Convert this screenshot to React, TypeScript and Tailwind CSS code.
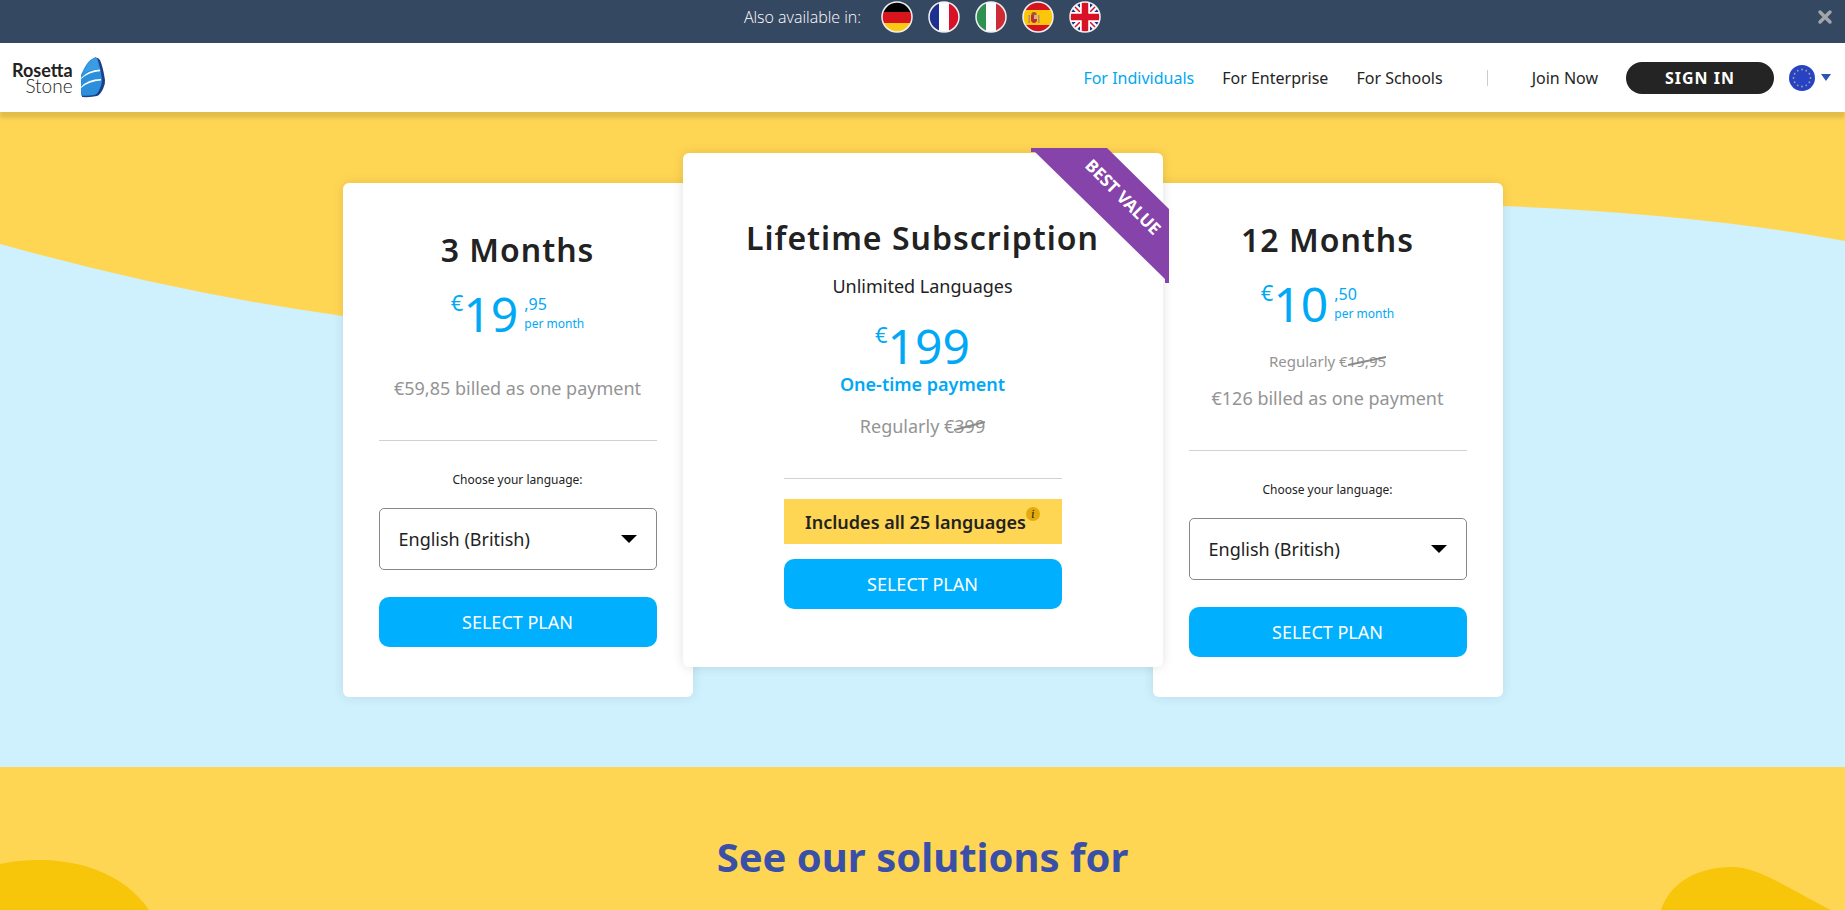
import { useState } from "react";
import type { ReactNode } from "react";

type FlagCode = "de" | "fr" | "it" | "es" | "gb";

interface Plan {
    id: string;
    title: string;
    whole: string;
    cents: string;
    regularly?: string;
    billed: string;
}

const flags: { code: FlagCode; label: string }[] = [
    { code: "de", label: "Deutsch" },
    { code: "fr", label: "Français" },
    { code: "it", label: "Italiano" },
    { code: "es", label: "Español" },
    { code: "gb", label: "English" },
];

const navLinks = [
    { label: "For Individuals", active: true },
    { label: "For Enterprise", active: false },
    { label: "For Schools", active: false },
];

const languages = ["English (British)", "English (American)", "French", "German", "Italian", "Spanish (Spain)"];

const threeMonths: Plan = {
    id: "three-months",
    title: "3 Months",
    whole: "19",
    cents: ",95",
    billed: "€59,85 billed as one payment",
};

const twelveMonths: Plan = {
    id: "twelve-months",
    title: "12 Months",
    whole: "10",
    cents: ",50",
    regularly: "19,95",
    billed: "€126 billed as one payment",
};

function FlagArt({ code }: { code: FlagCode }) {
    switch (code) {
        case "de":
            return (
                <>
                    <rect width="32" height="11" fill="#000" />
                    <rect y="11" width="32" height="11" fill="#d8141c" />
                    <rect y="22" width="32" height="10" fill="#fcc917" />
                </>
            );
        case "fr":
            return (
                <>
                    <rect width="11" height="32" fill="#1d2f8f" />
                    <rect x="11" width="10" height="32" fill="#fff" />
                    <rect x="21" width="11" height="32" fill="#d81126" />
                </>
            );
        case "it":
            return (
                <>
                    <rect width="11" height="32" fill="#2f9150" />
                    <rect x="11" width="10" height="32" fill="#fff" />
                    <rect x="21" width="11" height="32" fill="#cf2b37" />
                </>
            );
        case "es":
            return (
                <>
                    <rect width="32" height="32" fill="#d6141f" />
                    <rect y="9" width="32" height="15" fill="#fcc60a" />
                    <path d="M6.500 14h1.500v8H6.500zM16 14h1.500v8H16z" fill="#b98a6a" />
                    <path d="M9 14h6v5q0 2.500-3 3-3-.500-3-3z" fill="#b5323a" />
                    <path d="M12 14h3v4h-3z" fill="#d9a9a0" />
                    <path d="M9.500 12q2.500-2 5 0v2h-5z" fill="#a5562f" />
                </>
            );
        case "gb":
            return (
                <>
                    <rect width="32" height="32" fill="#1d2f8f" />
                    <path d="M0 0l32 32M32 0L0 32" stroke="#fff" strokeWidth="6" />
                    <path d="M0 0l32 32M32 0L0 32" stroke="#d81126" strokeWidth="1.500" />
                    <path d="M16 0v32M0 16h32" stroke="#fff" strokeWidth="10" />
                    <path d="M16 0v32M0 16h32" stroke="#d81126" strokeWidth="6.500" />
                </>
            );
    }
}

function Flag({ code }: { code: FlagCode }) {
    return (
        <svg viewBox="0 0 32 32" className="size-8" aria-hidden="true">
            <defs>
                <clipPath id={`flag-${code}`}>
                    <circle cx="16" cy="16" r="15" />
                </clipPath>
            </defs>
            <g clipPath={`url(#flag-${code})`}>
                <FlagArt code={code} />
            </g>
            <circle cx="16" cy="16" r="15" fill="none" stroke="#f1f1f1" strokeWidth="1.5" />
        </svg>
    );
}

function TopBar() {
    const [open, setOpen] = useState(true);

    if (!open) return null;

    return (
        <div className="flex h-[43px] items-start justify-between bg-[#354862] px-3">
            <div className="w-4" />
            <div className="flex items-center pt-px">
                <span className="mr-5 font-['Open_Sans',sans-serif] text-base font-light text-white">Also available in:</span>
                <div className="flex gap-[15px]">
                    {flags.map((flag) => (
                        <a key={flag.code} href="#" aria-label={flag.label}>
                            <Flag code={flag.code} />
                        </a>
                    ))}
                </div>
            </div>
            <button type="button" aria-label="Close" className="mt-[9px] text-[#a3a5a8]" onClick={() => setOpen(false)}>
                <svg viewBox="0 0 16 16" className="size-4" aria-hidden="true">
                    <path d="M3 3l10 10M13 3L3 13" stroke="currentColor" strokeWidth="3.500" strokeLinecap="round" />
                </svg>
            </button>
        </div>
    );
}

function Logo() {
    return (
        <a href="#" className="flex items-center gap-[7px] font-[Lato,sans-serif] text-[#222]">
            <span className="flex flex-col text-right leading-4">
                <span className="text-lg leading-4 font-bold">Rosetta</span>
                <span className="text-[19px] leading-4 font-light">Stone</span>
            </span>
            <svg viewBox="0 0 26 41" className="h-[41px] w-[26px]" aria-hidden="true">
                <path d="M15 .5Q18 0 20 3q3 7 5 20 .500 4-2 9-3 6-6 7-6 1.500-15 1L1 22l1-4Q6 8 9 5q3-3.500 6-4.500z" fill="#1d3f8a" />
                <path d="M15 .5q2 0 3 3 3 9 4 19 0 6-3 11-2 4-5 4.500-6 1-13 .5V18Q5 9 8 5.500 11 2 15 .5z" fill="#2b8fdc" />
                <path d="M15 1q2 0 2.500 3l2 9Q9 12 3 17 7 8 9 5.500 12 2 15 1z" fill="#3b9be3" />
                <path d="M1 21Q8 13 20 12.500v1.800Q9 15 1 22zM1 30q7-8 20-8v1.500Q9 24 1 31z" fill="#fff" />
            </svg>
        </a>
    );
}

function RegionFlag() {
    return (
        <svg viewBox="0 0 26 26" className="size-[26px]" aria-hidden="true">
            <circle cx="13" cy="13" r="13" fill="#2743c4" />
            {Array.from({ length: 12 }, (_, i) => (
                <circle
                    key={i}
                    cx={13 + 8.5 * Math.sin((i * Math.PI) / 6)}
                    cy={13 - 8.5 * Math.cos((i * Math.PI) / 6)}
                    r="0.9"
                    fill="#a9a08c"
                />
            ))}
        </svg>
    );
}

function Header() {
    return (
        <header className="relative z-10 flex h-[69px] items-center justify-between bg-white pr-3.5 pl-3 shadow-[0_6px_4px_rgba(0,0,0,0.12)]">
            <Logo />
            <nav className="flex items-center text-base">
                <div className="flex gap-7">
                    {navLinks.map((link) => (
                        <a key={link.label} href="#" className={link.active ? "text-[#00a8f0]" : "text-[#242424]"}>
                            {link.label}
                        </a>
                    ))}
                </div>
                <div className="mx-11 h-4 w-px bg-[#ccc]" />
                <a href="#" className="text-[#242424]">Join Now</a>
                <button type="button" className="ml-7 h-8 w-[148px] rounded-full bg-[#242424] font-bold tracking-[1px] text-white">
                    SIGN IN
                </button>
                <button type="button" aria-label="Choose region" className="ml-[15px] flex items-center gap-1.5">
                    <RegionFlag />
                    <svg viewBox="0 0 10 7" className="h-[7px] w-2.5" aria-hidden="true">
                        <path d="M0 0h10L5 7z" fill="#2f55b5" />
                    </svg>
                </button>
            </nav>
        </header>
    );
}

function SelectPlanButton() {
    return (
        <button type="button" className="h-[50px] w-full rounded-[10px] bg-[#00b0ff] text-lg text-white">
            SELECT PLAN
        </button>
    );
}

function Struck({ children }: { children: ReactNode }) {
    return (
        <span className="relative">
            {children}
            <svg viewBox="0 0 32 10" preserveAspectRatio="none" className="absolute inset-x-0 top-1/2 h-2.5 w-full -translate-y-1/2" aria-hidden="true">
                <path d="M0 9L32 1" stroke="#8a8a8a" strokeWidth="2" />
            </svg>
        </span>
    );
}

function PlanCard({ plan }: { plan: Plan }) {
    return (
        <section className="flex h-[514px] w-[350px] flex-col justify-center rounded-md bg-white px-9 pb-[3px] text-center shadow-[0_0_12px_rgba(0,0,0,0.1)]">
            <h2 className="text-[32px] leading-10 font-semibold tracking-[1px]">{plan.title}</h2>
            <div className="mt-5 flex justify-center text-[#00a8f5]">
                <span className="text-[22px] leading-6">€</span>
                <span className="text-5xl">{plan.whole}</span>
                <span className="ml-1.5 flex flex-col pt-1 text-left">
                    <span className="text-base leading-5">{plan.cents}</span>
                    <span className="text-xs leading-5">per month</span>
                </span>
            </div>
            <div className={plan.regularly ? "mt-[23px] text-[#949494]" : "mt-9 text-[#949494]"}>
                {plan.regularly && (
                    <p className="mb-[13px] text-[15px] leading-5">
                        Regularly €<Struck>{plan.regularly}</Struck>
                    </p>
                )}
                <p className="text-lg">{plan.billed}</p>
            </div>
            <hr className="mt-[38px] border-[#d2d2d2]" />
            <label htmlFor={plan.id} className="mt-[31px] text-xs">Choose your language:</label>
            <div className="relative mt-5">
                <select id={plan.id} className="h-[62px] w-full appearance-none rounded-[5px] border border-[#888] bg-white px-[19px] text-lg">
                    {languages.map((language) => (
                        <option key={language}>{language}</option>
                    ))}
                </select>
                <svg viewBox="0 0 16 8" className="pointer-events-none absolute top-[27px] right-5 h-2 w-4" aria-hidden="true">
                    <path d="M0 0h16L8 8z" />
                </svg>
            </div>
            <div className="mt-[27px]">
                <SelectPlanButton />
            </div>
        </section>
    );
}

function LifetimeCard() {
    return (
        <section className="relative z-1 -mx-2.5 flex h-[514px] w-[480px] flex-col items-center rounded-md bg-white pt-[65px] text-center shadow-[0_0_12px_rgba(0,0,0,0.12)]">
            <div className="absolute -top-[5px] -right-1.5 h-[135px] w-[138px]">
                <svg viewBox="0 0 138 135" className="absolute inset-0" aria-hidden="true">
                    <path d="M0 0h76l62 61v74h-4v-4L4 4H0z" fill="#8643a9" />
                </svg>
                <span className="absolute top-[37px] left-8 w-[120px] rotate-45 text-center text-[17px] leading-6 font-bold text-white">
                    BEST VALUE
                </span>
            </div>
            <h2 className="text-[32px] leading-10 font-semibold tracking-[1px]">Lifetime Subscription</h2>
            <p className="mt-3.5 text-lg">Unlimited Languages</p>
            <div className="mt-[22px] flex text-[#00a8f5]">
                <span className="text-[22px] leading-6">€</span>
                <span className="text-5xl">199</span>
            </div>
            <p className="text-lg font-semibold text-[#00a8f5]">One-time payment</p>
            <p className="mt-3.5 text-lg text-[#949494]">
                Regularly €<Struck>399</Struck>
            </p>
            <div className="mt-[38px] w-[278px]">
                <hr className="border-[#d2d2d2]" />
                <div className="mt-5 flex h-[45px] items-center justify-center bg-[#ffd653] text-lg font-semibold">
                    Includes all 25 languages
                    <button type="button" aria-label="More about the languages" className="mb-4 size-3.5 rounded-full bg-[#e5ab0c] font-serif text-xs leading-3.5 font-normal italic">
                        i
                    </button>
                </div>
                <div className="mt-[15px]">
                    <SelectPlanButton />
                </div>
            </div>
        </section>
    );
}

function Pricing() {
    return (
        <main className="relative bg-[#cff1fe] pt-[41px] pb-[70px]">
            <svg viewBox="0 0 1845 655" preserveAspectRatio="none" className="absolute inset-0 size-full" aria-hidden="true">
                <path d="M0 0h1845v129Q1700 102 1503 94C1100 80 800 240 343 204Q180 182 0 132z" fill="#ffd653" />
            </svg>
            <div className="relative flex justify-center">
                <div className="mt-[30px]">
                    <PlanCard plan={threeMonths} />
                </div>
                <LifetimeCard />
                <div className="mt-[30px]">
                    <PlanCard plan={twelveMonths} />
                </div>
            </div>
        </main>
    );
}

function Solutions() {
    return (
        <section className="relative overflow-hidden bg-[#ffd653] pt-16 pb-7 text-center">
            <svg viewBox="0 0 150 50" className="absolute bottom-0 left-0 h-[50px] w-[150px]" aria-hidden="true">
                <path d="M0 4C45-6 115 0 149 50H0z" fill="#f7c509" />
            </svg>
            <svg viewBox="0 0 170 43" className="absolute right-[14px] bottom-0 h-[43px] w-[170px]" aria-hidden="true">
                <path d="M0 43C10 14 38 0 71 0c26 0 50 18 99 43z" fill="#f7c509" />
            </svg>
            <h2 className="relative text-[40px] leading-[51px] font-bold text-[#3a50a8]">See our solutions for</h2>
        </section>
    );
}

export default function App() {
    return (
        <div className="bg-[#ffd653] font-['Noto_Sans',sans-serif] text-[#222]">
            <TopBar />
            <Header />
            <Pricing />
            <Solutions />
        </div>
    );
}
